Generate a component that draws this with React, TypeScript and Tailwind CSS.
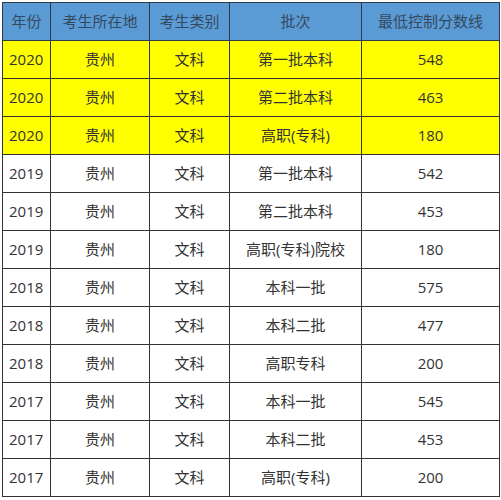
import React from 'react';

const rows: [string, string, string, string, string, boolean][] = [
  ['2020', '贵州', '文科', '第一批本科', '548', true],
  ['2020', '贵州', '文科', '第二批本科', '463', true],
  ['2020', '贵州', '文科', '高职(专科)', '180', true],
  ['2019', '贵州', '文科', '第一批本科', '542', false],
  ['2019', '贵州', '文科', '第二批本科', '453', false],
  ['2019', '贵州', '文科', '高职(专科)院校', '180', false],
  ['2018', '贵州', '文科', '本科一批', '575', false],
  ['2018', '贵州', '文科', '本科二批', '477', false],
  ['2018', '贵州', '文科', '高职专科', '200', false],
  ['2017', '贵州', '文科', '本科一批', '545', false],
  ['2017', '贵州', '文科', '本科二批', '453', false],
  ['2017', '贵州', '文科', '高职(专科)', '200', false],
];

const font = { fontFamily: '"Open Sans", "Noto Sans CJK SC", sans-serif' };

export default function App() {
  return (
    <div className="w-[501px] h-[500px] bg-white pt-[2px] pl-[2px]" style={font}>
      <table className="w-[497px] border-collapse table-fixed text-[15px] text-[#333]">
        <colgroup>
          <col className="w-[48px]" />
          <col className="w-[99px]" />
          <col className="w-[80px]" />
          <col className="w-[132px]" />
          <col className="w-[138px]" />
        </colgroup>
        <thead>
          <tr className="h-[38px] bg-[#5b9bd5] text-[#34495e]">
            <th className="border border-[#2f3b46] font-normal text-center p-0">年份</th>
            <th className="border border-[#2f3b46] font-normal text-center p-0">考生所在地</th>
            <th className="border border-[#2f3b46] font-normal text-center p-0">考生类别</th>
            <th className="border border-[#2f3b46] font-normal text-center p-0">批次</th>
            <th className="border border-[#2f3b46] font-normal text-center p-0">最低控制分数线</th>
          </tr>
        </thead>
        <tbody>
          {rows.map((r, i) => (
            <tr key={i} className={r[5] ? 'h-[38px] bg-[#ffff00]' : 'h-[38px] bg-white'}>
              <td className="border border-[#333] pl-[6px] p-0 text-left">{r[0]}</td>
              <td className="border border-[#333] p-0 text-center">{r[1]}</td>
              <td className="border border-[#333] p-0 text-center">{r[2]}</td>
              <td className="border border-[#333] p-0 text-center">{r[3]}</td>
              <td className="border border-[#333] p-0 text-center">{r[4]}</td>
            </tr>
          ))}
        </tbody>
      </table>
    </div>
  );
}
